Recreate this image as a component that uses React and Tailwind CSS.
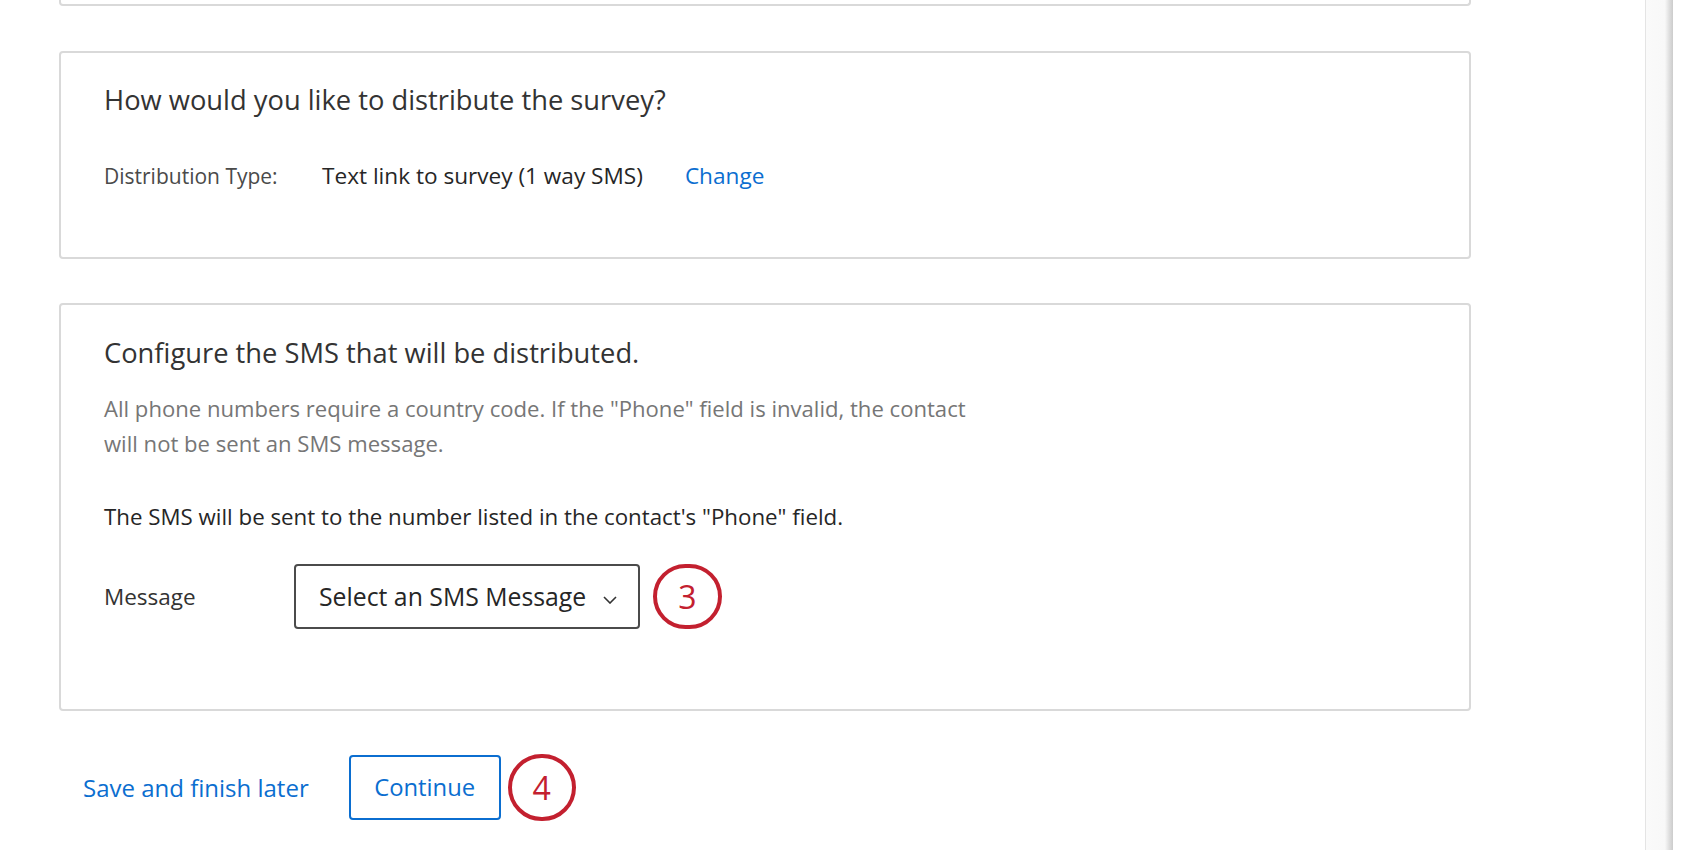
import React from "react";

const font = { fontFamily: '"Open Sans", "Noto Sans", Arial, sans-serif' };

function Circle({ n, className }) {
  return (
    <div
      className={
        "flex items-center justify-center rounded-full border-[4px] border-[#c3202f] text-[#c3202f] text-[32px] leading-none bg-white " +
        className
      }
    >
      {n}
    </div>
  );
}

export default function App() {
  return (
    <div className="flex h-[850px] w-[1700px] overflow-hidden bg-white" style={font}>
      <div className="w-[1645px] shrink-0 pl-[59px]">
        {/* partial card above */}
        <div className="h-[6px] w-[1412px] rounded-b-[4px] border-2 border-t-0 border-[#d9d9d9]" />

        {/* distribution card */}
        <div className="mt-[45px] w-[1412px] rounded-[4px] border-2 border-[#d9d9d9] pl-[43px] pt-[31px] pb-[67px]">
          <h2 className="text-[27.3px] leading-[32px] text-[#333333] font-normal">
            How would you like to distribute the survey?
          </h2>
          <div className="mt-[46px] flex text-[21px] leading-[28px]">
            <span className="w-[218px] text-[#4a4a4a]">Distribution Type:</span>
            <span className="text-[22.6px] text-[#262626]">Text link to survey (1 way SMS)</span>
            <a className="ml-[42px] text-[22.6px] text-[#0b6ed0] cursor-pointer">Change</a>
          </div>
        </div>

        {/* sms card */}
        <div className="mt-[44px] w-[1412px] rounded-[4px] border-2 border-[#d9d9d9] pl-[43px] pt-[32px] pb-[80px]">
          <h2 className="text-[27.3px] leading-[32px] text-[#333333] font-normal">
            Configure the SMS that will be distributed.
          </h2>
          <p className="mt-[22px] text-[22.1px] leading-[35px] text-[#767676]">
            All phone numbers require a country code. If the "Phone" field is invalid, the contact
            <br />
            will not be sent an SMS message.
          </p>
          <p className="mt-[42px] text-[22.3px] leading-[28px] text-[#262626]">
            The SMS will be sent to the number listed in the contact's "Phone" field.
          </p>
          <div className="mt-[33px] flex items-center">
            <span className="w-[190px] text-[22.5px] leading-[28px] text-[#333333]">Message</span>
            <div className="flex h-[65px] w-[346px] items-center rounded-[4px] border-2 border-[#4b4b4b] pl-[23px] text-[24.8px] text-[#262626]">
              <span>Select an SMS Message</span>
              <svg className="ml-[17px] mt-[6px]" width="14" height="8" viewBox="0 0 14 8" fill="none">
                <polyline points="1,1 7,7 13,1" stroke="#333" strokeWidth="1.6" />
              </svg>
            </div>
            <Circle n="3" className="ml-[13px] h-[65px] w-[69px]" />
          </div>
        </div>

        {/* buttons */}
        <div className="mt-[43px] flex items-center">
          <a className="ml-[24px] text-[24px] leading-[32px] text-[#0b6ed0] cursor-pointer">
            Save and finish later
          </a>
          <button className="ml-[40px] h-[65px] w-[152px] rounded-[4px] border-2 border-[#0b6ed0] text-[23.8px] text-[#0b6ed0] bg-white">
            Continue
          </button>
          <Circle n="4" className="ml-[7px] h-[67px] w-[68px]" />
        </div>
      </div>

      {/* scrollbar track */}
      <div className="h-full w-[28px] shrink-0 border-l border-[#e4e4e4] bg-[linear-gradient(to_right,#fafafa_0%,#f8f8f8_70%,#dcdcdc_88%,#cccccc_100%)]" />
      <div className="h-full flex-1 bg-white" />
    </div>
  );
}
